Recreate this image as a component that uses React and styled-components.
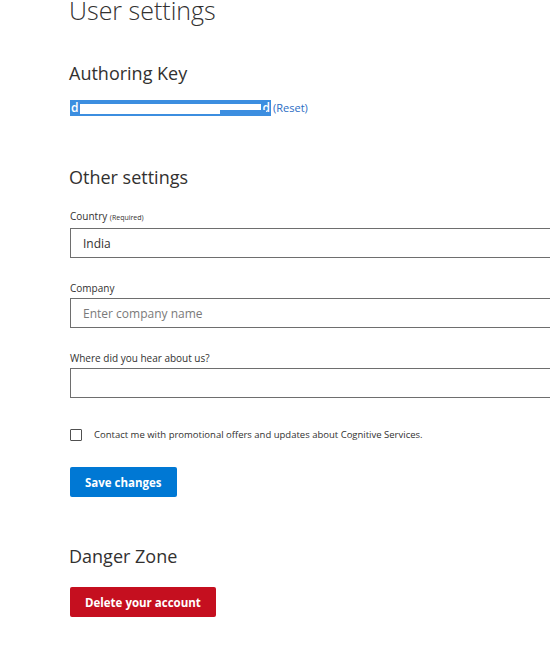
import React, { useState } from "react";
import styled, { createGlobalStyle } from "styled-components";

const Global = createGlobalStyle`
    body {
        margin: 0;
        background: #ffffff;
        font-family: "Open Sans", "Noto Sans", sans-serif;
        color: #252423;
    }
`;

const fields = [
    { id: "company", label: "Company", placeholder: "Enter company name" },
    { id: "source", label: "Where did you hear about us?", placeholder: "" },
];

const App = () => {
    const [country, setCountry] = useState("India");
    const [promo, setPromo] = useState(false);
    return (
        <React.Fragment>
            <Global />
            <S.page>
                <S.title>User settings</S.title>

                <S.heading top={41}>Authoring Key</S.heading>
                <S.keyRow>
                    <S.keyBar>
                        <S.keyChar>d</S.keyChar>
                        <S.redacted>
                            <S.blueChunk left={140} width={46} />
                        </S.redacted>
                        <S.keyChar>d</S.keyChar>
                    </S.keyBar>
                    <S.reset href="#">(Reset)</S.reset>
                </S.keyRow>

                <S.heading top={49}>Other settings</S.heading>

                <S.field top={20}>
                    <S.label>
                        Country <S.small>(Required)</S.small>
                    </S.label>
                    <S.input
                        value={country}
                        onChange={(e) => setCountry(e.target.value)}
                    />
                </S.field>

                {fields.map((f) => (
                    <S.field key={f.id}>
                        <S.label>{f.label}</S.label>
                        <S.input placeholder={f.placeholder} />
                    </S.field>
                ))}

                <S.check>
                    <S.box
                        type="checkbox"
                        checked={promo}
                        onChange={() => setPromo(!promo)}
                    />
                    Contact me with promotional offers and updates about
                    Cognitive Services.
                </S.check>

                <S.button color="#0078d4">Save changes</S.button>

                <S.heading top={47}>Danger Zone</S.heading>
                <S.button color="#c50f1f" top={19}>
                    Delete your account
                </S.button>
            </S.page>
        </React.Fragment>
    );
};

const S = {
    page: styled.div`
        padding: 0 0 40px 70px;
        overflow: hidden;
    `,
    title: styled.h1`
        margin: 0 0 0 -1px;
        font-size: 25px;
        font-weight: 300;
        line-height: 20px;
        color: #323130;
    `,
    heading: styled.h2`
        margin: ${(p) => p.top || 0}px 0 0 -1px;
        font-size: 18px;
        font-weight: 400;
        line-height: 24px;
        color: #323130;
    `,
    keyRow: styled.div`
        display: flex;
        align-items: center;
        margin-top: 14px;
        height: 17px;
    `,
    keyBar: styled.div`
        display: flex;
        align-items: stretch;
        width: 201px;
        height: 16px;
        background: #3c8ee0;
    `,
    keyChar: styled.span`
        color: #ffffff;
        font-size: 12px;
        font-weight: 600;
        line-height: 16px;
        padding: 0 1px;
    `,
    redacted: styled.span`
        position: relative;
        flex: 1;
        margin: 4px 1px 2px;
        background: #ffffff;
    `,
    blueChunk: styled.span`
        position: absolute;
        left: ${(p) => p.left}px;
        width: ${(p) => p.width}px;
        bottom: 0;
        height: 4px;
        background: #3c8ee0;
    `,
    reset: styled.a`
        margin-left: 2px;
        font-size: 11px;
        color: #2b6cc4;
        text-decoration: none;
    `,
    field: styled.div`
        margin-top: ${(p) => p.top || 23}px;
    `,
    label: styled.label`
        display: block;
        font-size: 10px;
        line-height: 14px;
        color: #323130;
        margin-bottom: 3px;
    `,
    small: styled.span`
        font-size: 7px;
    `,
    input: styled.input`
        box-sizing: border-box;
        display: block;
        width: 500px;
        height: 30px;
        padding: 0 12px;
        border: 1px solid #6e6e6e;
        border-radius: 0;
        font-family: "Open Sans", "Noto Sans", sans-serif;
        font-size: 12px;
        color: #323130;
        outline: 0;
        &::placeholder {
            color: #7a7a7a;
        }
    `,
    check: styled.label`
        display: flex;
        align-items: center;
        gap: 12px;
        margin-top: 30px;
        font-size: 9.5px;
        color: #323130;
    `,
    box: styled.input`
        appearance: none;
        margin: 0;
        width: 12px;
        height: 12px;
        border: 1px solid #505050;
        border-radius: 1px;
        background: #fff;
    `,
    button: styled.button`
        display: block;
        margin-top: ${(p) => p.top || 26}px;
        padding: 0 15px;
        height: 30px;
        border: 0;
        border-radius: 2px;
        background: ${(p) => p.color};
        color: #ffffff;
        font-family: "Open Sans", "Noto Sans", sans-serif;
        font-size: 11.5px;
        font-weight: 700;
        cursor: pointer;
    `,
};

export default App;
